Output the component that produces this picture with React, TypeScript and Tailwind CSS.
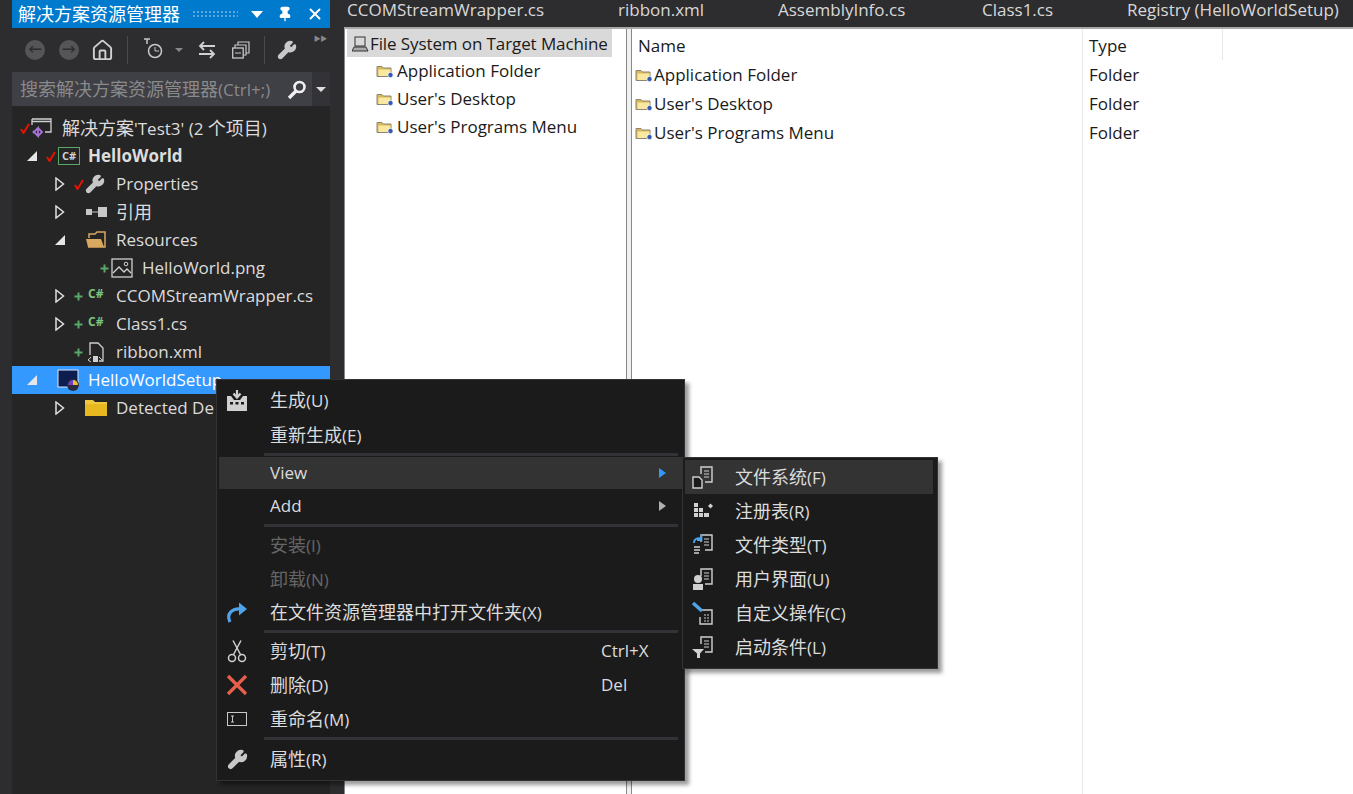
import { ReactNode } from "react";
import { Pin, X, Home, Wrench } from "lucide-react";

const FONT = "font-['Open_Sans','Noto_Sans_CJK_SC',sans-serif]";

/* CJK runs sit a point larger than the latin text, as in the VS UI font */
function Txt({ children }: { children: string }) {
  const parts = children.split(/([\u4e00-\u9fff]+)/);
  return (
    <>
      {parts.map((p, i) =>
        i % 2 === 1 ? (
          <span key={i} className="text-[18px]">{p}</span>
        ) : (
          <span key={i}>{p}</span>
        )
      )}
    </>
  );
}

/* ---------- small drawn icons ---------- */
const Check = () => (
  <svg width="10" height="11" viewBox="0 0 10 11" className="shrink-0">
    <path d="M1 6 L3.5 10 L9 1" fill="none" stroke="#e51400" strokeWidth="2" />
  </svg>
);

const Plus = () => (
  <svg width="9" height="9" viewBox="0 0 9 9" className="shrink-0">
    <path d="M4.5 0.5V8.5M0.5 4.5H8.5" stroke="#59a869" strokeWidth="2" />
  </svg>
);

const Open = () => (
  <svg width="10" height="14" viewBox="0 0 10 14" className="shrink-0">
    <path d="M1 1 L8.5 7 L1 13Z" fill="none" stroke="#e0e0e0" strokeWidth="1.5" />
  </svg>
);

const Expanded = () => (
  <svg width="10" height="10" viewBox="0 0 10 10" className="shrink-0">
    <path d="M10 0V10H0Z" fill="#e6e6e6" />
  </svg>
);

const FolderSmall = () => (
  <svg width="18" height="14" viewBox="0 0 18 14" className="shrink-0">
    <path d="M1 2.5H6L7.5 4H15V12.500H1Z" fill="#d8b858" stroke="#8c8474" />
    <path d="M2.500 5.500H14.500V12H2.500Z" fill="#f8e8a0" />
    <circle cx="14.5" cy="11" r="2.600" fill="#3458b0" stroke="#fff" strokeWidth="0.7" />
  </svg>
);

const Doc = ({ children }: { children?: ReactNode }) => (
  <svg width="24" height="24" viewBox="0 0 24 24" className="shrink-0">
    <path d="M10 9V2H21V17H14" fill="none" stroke="#d0d0d0" strokeWidth="1.4" />
    <path d="M13 6H18M13 9H18M13 12H18" stroke="#d0d0d0" />
    {children}
  </svg>
);

const MenuIcons: Record<string, ReactNode> = {
  fs: <Doc><path d="M2 12H8L11 15V23H2Z" fill="#1b1b1c" stroke="#d0d0d0" strokeWidth="1.4" /></Doc>,
  reg: (
    <svg width="24" height="24" viewBox="0 0 24 24">
      <path d="M3 4h4v4H3zM3 9h4v4H3zM8 9h4v4H8zM3 14h4v4H3zM8 14h4v4H8zM13 14h5v4h-5z" fill="#d0d0d0" />
      <path d="M17 7l2.500-2.500L22 7l-2.500 2.500z" fill="#d0d0d0" />
    </svg>
  ),
  type: <Doc><path d="M3 10a4.500 4.500 0 0 1 7-4M10.500 2v5H6" fill="none" stroke="#4fa3e8" strokeWidth="1.800" /><path d="M3 14H9M3 17H9M3 20H8" stroke="#d0d0d0" strokeWidth="1.300" /></Doc>,
  ui: <Doc><circle cx="7" cy="12" r="4" fill="#d0d0d0" /><path d="M2 23V17H12V23Z" fill="#d0d0d0" /></Doc>,
  act: (
    <svg width="24" height="24" viewBox="0 0 24 24">
      <path d="M9 9H21V23H9V16" fill="none" stroke="#d0d0d0" strokeWidth="1.400" />
      <path d="M13 14h5M13 17h5M13 20h5" stroke="#d0d0d0" strokeDasharray="2 1" />
      <path d="M2 2L11 10" stroke="#4fa3e8" strokeWidth="3.500" />
    </svg>
  ),
  cond: <Doc><path d="M1 14H13L9 18.500V23H6V18.500Z" fill="#d0d0d0" /></Doc>,
  build: (
    <svg width="24" height="24" viewBox="0 0 24 24">
      <path d="M12 1V7M8.500 4.500L12 8.500L15.500 4.500" fill="none" stroke="#d0d0d0" strokeWidth="2.200" />
      <path d="M2 7H6L9 11H15L18 7H22V22H2Z" fill="#d0d0d0" />
      <path d="M5 13h3v2.500H5zM10.500 13h3v2.500h-3zM16 13h3v2.500h-3z" fill="#1b1b1c" />
    </svg>
  ),
  open: (
    <svg width="24" height="24" viewBox="0 0 24 24">
      <path d="M5 21C1 13 7 7 16 8" fill="none" stroke="#4fa3e8" strokeWidth="3.200" />
      <path d="M14 1.500L22 8L14 14.500Z" fill="#4fa3e8" />
    </svg>
  ),
  cut: (
    <svg width="24" height="24" viewBox="0 0 24 24">
      <path d="M8.500 15.500L16 1.500M15.500 15.500L8 1.500" stroke="#d0d0d0" strokeWidth="1.500" />
      <circle cx="7" cy="19" r="3.500" fill="none" stroke="#d0d0d0" strokeWidth="1.500" />
      <circle cx="17" cy="19" r="3.500" fill="none" stroke="#d0d0d0" strokeWidth="1.500" />
    </svg>
  ),
  del: (
    <svg width="24" height="24" viewBox="0 0 24 24">
      <path d="M3 3L21 21M21 3L3 21" stroke="#e8604c" strokeWidth="3.200" />
    </svg>
  ),
  rename: (
    <svg width="24" height="24" viewBox="0 0 24 24">
      <rect x="2.500" y="5.500" width="19" height="13" fill="none" stroke="#c8c8c8" />
      <path d="M6 9h3M7.500 9v6M6 15h3" stroke="#c8c8c8" />
    </svg>
  ),
  wrench: <Wrench size={21} color="#c8c8c8" fill="#c8c8c8" />,
};

/* ---------- solution explorer ---------- */
type Row = { offset: string; toggle?: "open" | "down"; mark?: "check" | "plus"; icon: ReactNode; label: string; bold?: boolean; active?: boolean };

const CsBox = () => (
  <span className="ml-[1px] w-[22px] h-[18px] border border-[#59a869] text-[11px] leading-[16px] text-center font-bold text-[#d0d0d0] shrink-0">C#</span>
);
const CsText = () => <span className="ml-[3px] w-[20px] text-[12px] leading-none font-bold text-[#7cc47f] shrink-0 -mt-1">C#</span>;

const ROWS: Row[] = [
  { offset: "-ml-[11px]", mark: "check", label: "解决方案'Test3' (2 个项目)", icon: (
    <svg width="22" height="22" viewBox="0 0 22 22" className="shrink-0">
      <path d="M1 2H20V15H14M1 2V8M1 4.500H20" fill="none" stroke="#d0d0d0" strokeWidth="1.300" />
      <path d="M2 14L7 19V11L2 16M7 11L11 15L7 19" fill="none" stroke="#a672d8" strokeWidth="1.800" />
    </svg>
  ) },
  { offset: "ml-[15px]", toggle: "down", mark: "check", label: "HelloWorld", bold: true, icon: <CsBox /> },
  { offset: "ml-[43px]", toggle: "open", mark: "check", label: "Properties", icon: <Wrench size={20} color="#c8c8c8" fill="#c8c8c8" className="shrink-0" /> },
  { offset: "ml-[43px]", toggle: "open", label: "引用", icon: (
    <svg width="22" height="14" viewBox="0 0 22 14" className="shrink-0">
      <path d="M1 4h6v6H1zM13 2h9v10h-9z" fill="#c8c8c8" /><path d="M7 7h6" stroke="#c8c8c8" />
    </svg>
  ) },
  { offset: "ml-[43px]", toggle: "down", label: "Resources", icon: (
    <svg width="22" height="18" viewBox="0 0 22 18" className="shrink-0">
      <path d="M4 7V3H10L12 1H20V16H3" fill="none" stroke="#d8a860" strokeWidth="1.500" />
      <path d="M1 8H16L19 16H3Z" fill="#d8a860" />
    </svg>
  ) },
  { offset: "ml-[69px]", mark: "plus", label: "HelloWorld.png", icon: (
    <svg width="22" height="20" viewBox="0 0 22 20" className="shrink-0">
      <rect x="1" y="1" width="20" height="18" fill="none" stroke="#d0d0d0" strokeWidth="1.300" />
      <path d="M2 15L8 9L13 14L16 11L20 15" fill="none" stroke="#d0d0d0" strokeWidth="1.300" />
      <circle cx="15" cy="6" r="1.800" fill="none" stroke="#d0d0d0" />
    </svg>
  ) },
  { offset: "ml-[43px]", toggle: "open", mark: "plus", label: "CCOMStreamWrapper.cs", icon: <CsText /> },
  { offset: "ml-[43px]", toggle: "open", mark: "plus", label: "Class1.cs", icon: <CsText /> },
  { offset: "ml-[43px]", mark: "plus", label: "ribbon.xml", icon: (
    <svg width="18" height="22" viewBox="0 0 18 22" className="ml-[2px] shrink-0">
      <path d="M3 14V2H11L16 7V20H12" fill="none" stroke="#d0d0d0" strokeWidth="1.300" />
      <path d="M1 19l3-3M1 19l3 2M15 19l-3-3" stroke="#d0d0d0" />
      <rect x="6" y="15" width="5" height="6" fill="#d0d0d0" />
    </svg>
  ) },
  { offset: "ml-[15px]", toggle: "down", active: true, label: "HelloWorldSetup", icon: (
    <svg width="24" height="24" viewBox="0 0 24 24" className="shrink-0">
      <rect x="1" y="2" width="20" height="17" fill="#0d1d50" stroke="#dbe8f8" />
      <circle cx="16" cy="17" r="6" fill="#2a2a40" />
      <path d="M16 12a5 5 0 0 1 5 5h-5z" fill="#e8c030" /><path d="M11 17a5 5 0 0 1 5-5v5z" fill="#7040c0" />
    </svg>
  ) },
  { offset: "ml-[43px]", toggle: "open", label: "Detected De", icon: (
    <svg width="22" height="18" viewBox="0 0 22 18" className="shrink-0">
      <path d="M0 1H8L10 3H22V17H0Z" fill="#f0c840" /><path d="M0 5H22V17H0Z" fill="#e8b820" />
    </svg>
  ) },
];

function TreeRow({ offset, toggle, mark, icon, label, bold, active }: Row) {
  return (
    <div className={`h-[28px] flex items-center whitespace-nowrap ${active ? "bg-[#3399ff] text-white" : "text-[#dcdcdc]"}`}>
      <div className={`flex items-center ${offset}`}>
        <span className="w-[19px] shrink-0 flex">{toggle === "open" ? <Open /> : toggle === "down" ? <Expanded /> : null}</span>
        <span className="w-[11px] shrink-0 flex">
          {mark === "check" && <Check />}
          {mark === "plus" && <Plus />}
        </span>
        <span className="w-[31px] shrink-0 flex">{icon}</span>
        <span className={`text-[17px] ${bold ? "font-bold" : ""}`}><Txt>{label}</Txt></span>
      </div>
    </div>
  );
}

const Sep = () => <div className="w-[1px] h-[28px] bg-[#4a4a4e] shrink-0" />;

const NavCircle = ({ glyph, className }: { glyph: string; className: string }) => (
  <span className={`w-[20px] h-[20px] rounded-full bg-[#555558] text-[#2d2d30] text-[14px] leading-[18px] text-center font-bold shrink-0 ${className}`}>{glyph}</span>
);

function Explorer() {
  return (
    <aside className="w-[318px] h-[794px] bg-[#252526] flex flex-col shrink-0">
      <div className="h-[28px] bg-[#007acc] text-white flex items-center pl-[6px]">
        <span className="text-[18px] whitespace-nowrap">解决方案资源管理器</span>
        <div className="ml-[12px] w-[46px] h-[8px] bg-[radial-gradient(#5aa8dc_1px,transparent_1px)] bg-[length:4px_4px]" />
        <span className="ml-[13px] w-0 h-0 border-x-[6px] border-x-transparent border-t-[7px] border-t-white" />
        <Pin size={16} fill="#fff" className="ml-[14px]" />
        <X size={18} strokeWidth={2.500} className="ml-[13px]" />
      </div>
      <div className="h-[44px] bg-[#2d2d30] flex items-center pl-[13px] relative">
        <NavCircle glyph="←" className="" />
        <NavCircle glyph="→" className="ml-[14px]" />
        <Home size={23} color="#d0d0d0" className="ml-[12px] shrink-0" />
        <div className="ml-[13px]"><Sep /></div>
        <svg width="22" height="24" viewBox="0 0 22 24" className="ml-[15px] shrink-0">
          <path d="M1 1H7M4 1V6" stroke="#c8c8c8" strokeWidth="1.500" />
          <circle cx="12" cy="13" r="6.500" fill="none" stroke="#c8c8c8" strokeWidth="1.500" />
          <path d="M12 9V13H16" fill="none" stroke="#c8c8c8" />
        </svg>
        <span className="ml-[10px] w-0 h-0 border-x-[4px] border-x-transparent border-t-[4px] border-t-[#888]" />
        <svg width="18" height="18" viewBox="0 0 18 18" className="ml-[15px] shrink-0">
          <path d="M17 5H2M6 1L2 5L6 9M1 13H16M12 9L16 13L12 17" fill="none" stroke="#d0d0d0" strokeWidth="1.800" />
        </svg>
        <svg width="18" height="18" viewBox="0 0 18 18" className="ml-[16px] shrink-0">
          <path d="M6 4V1H17V12H14M3 7V4H14V14H11" fill="none" stroke="#c8c8c8" strokeWidth="1.200" />
          <rect x="0.700" y="7" width="10.500" height="10" fill="#2d2d30" stroke="#c8c8c8" strokeWidth="1.300" />
          <path d="M3 12H9" stroke="#c8c8c8" />
        </svg>
        <div className="ml-[14px]"><Sep /></div>
        <Wrench size={20} color="#c8c8c8" fill="#c8c8c8" className="ml-[12px] shrink-0" />
        <span className="absolute right-[3px] top-[6px] text-[7px] text-[#888] tracking-tighter">▶▶</span>
      </div>
      <div className="h-[34px] bg-[#333337] flex items-center text-[#8a8a8a]">
        <div className="h-full bg-[#3f3f46] w-[300px] flex items-center pl-[8px] pr-[5px] pt-[1px] overflow-hidden">
          <span className="text-[17px] whitespace-nowrap flex-1"><Txt>搜索解决方案资源管理器(Ctrl+;)</Txt></span>
          <svg width="20" height="20" viewBox="0 0 20 20" className="shrink-0">
            <circle cx="12.500" cy="7" r="5" fill="none" stroke="#f0f0f0" strokeWidth="2.600" />
            <path d="M9 11L2 18" stroke="#f0f0f0" strokeWidth="3.400" />
          </svg>
        </div>
        <span className="ml-[4px] w-0 h-0 border-x-[5px] border-x-transparent border-t-[5px] border-t-[#ddd]" />
      </div>
      <div className="pt-[8px]">
        {ROWS.map((r) => (
          <TreeRow key={r.label} {...r} />
        ))}
      </div>
    </aside>
  );
}

/* ---------- right side: designer ---------- */
const TABS = [
  ["CCOMStreamWrapper.cs", "w-[271px]"],
  ["ribbon.xml", "w-[160px]"],
  ["AssemblyInfo.cs", "w-[204px]"],
  ["Class1.cs", "w-[145px]"],
  ["Registry (HelloWorldSetup)", "w-auto"],
];

const TREE_ITEMS = ["Application Folder", "User's Desktop", "User's Programs Menu"];

function Designer() {
  return (
    <main className="flex-1 min-w-0 h-[794px] flex flex-col">
      <div className="h-[19px] mb-[8px] flex items-center pl-[17px] text-[#d8d8d8] text-[17px] leading-[19px] whitespace-nowrap">
        {TABS.map(([t, w]) => (
          <span key={t} className={`${w} shrink-0`}>{t}</span>
        ))}
      </div>
      <div className="flex-1 min-h-0 ml-[14px] flex bg-white border-t-2 border-[#a8a8a8]">
        <section className="w-[282px] border-l border-[#888] pl-[2px] text-[17px] text-[#1a1a1a]">
          <div className="h-[28px] w-[265px] pt-[1px] bg-[#d9d9d9] flex items-center whitespace-nowrap pl-[5px] tracking-[-0.1px]">
            <svg width="18" height="16" viewBox="0 0 18 16" className="shrink-0">
              <rect x="3" y="1" width="10" height="9" fill="#d8d8d8" stroke="#333" />
              <path d="M0 15L2 11H14L16 15Z" fill="#aaa" stroke="#333" />
            </svg>
            File System on Target Machine
          </div>
          {TREE_ITEMS.map((t) => (
            <div key={t} className="h-[28px] flex items-center pl-[29px] whitespace-nowrap">
              <FolderSmall />
              <span className="ml-[3px]">{t}</span>
            </div>
          ))}
        </section>
        <div className="w-[6px] bg-[#f0f0f0] border-x border-[#888] shrink-0" />
        <section className="flex-1 flex text-[17px] text-[#1a1a1a]">
          <div className="w-[451px] border-r border-[#e8e8e8] shrink-0">
            <div className="h-[31px] pt-[2px] pl-[6px] flex items-center">Name</div>
            {TREE_ITEMS.map((t) => (
              <div key={t} className="h-[29px] pl-[3px] flex items-center whitespace-nowrap">
                <FolderSmall />
                <span className="ml-[1px]">{t}</span>
              </div>
            ))}
          </div>
          <div>
            <div className="h-[31px] w-[140px] pt-[2px] pl-[6px] flex items-center border-r border-[#e8e8e8]">Type</div>
            {TREE_ITEMS.map((t) => (
              <div key={t} className="h-[29px] pl-[6px] flex items-center">Folder</div>
            ))}
          </div>
        </section>
      </div>
    </main>
  );
}

/* ---------- context menus ---------- */
type Item = { label?: string; icon?: string; shortcut?: string; sub?: boolean; subActive?: boolean; disabled?: boolean; hot?: boolean; sep?: boolean; h?: string };

const MAIN_MENU: Item[] = [
  { label: "生成(U)", icon: "build", h: "h-[35px]" },
  { label: "重新生成(E)", h: "h-[34px]" },
  { sep: true },
  { label: "View", hot: true, sub: true, subActive: true, h: "h-[32px]" },
  { label: "Add", sub: true, h: "h-[34px]" },
  { sep: true },
  { label: "安装(I)", disabled: true, h: "h-[34px]" },
  { label: "卸载(N)", disabled: true, h: "h-[34px]" },
  { label: "在文件资源管理器中打开文件夹(X)", icon: "open", h: "h-[33px]" },
  { sep: true },
  { label: "剪切(T)", icon: "cut", shortcut: "Ctrl+X", h: "h-[34px]" },
  { label: "删除(D)", icon: "del", shortcut: "Del", h: "h-[34px]" },
  { label: "重命名(M)", icon: "rename", h: "h-[34px]" },
  { sep: true },
  { label: "属性(R)", icon: "wrench", h: "h-[36px]" },
];

const SUB_MENU: Item[] = [
  { label: "文件系统(F)", icon: "fs", hot: true },
  { label: "注册表(R)", icon: "reg" },
  { label: "文件类型(T)", icon: "type" },
  { label: "用户界面(U)", icon: "ui" },
  { label: "自定义操作(C)", icon: "act" },
  { label: "启动条件(L)", icon: "cond" },
];

function MenuRow({ item, textGap }: { item: Item; textGap: string }) {
  if (item.sep) return <div className="h-[3px] bg-[#333337] my-[1px] ml-[45px] mr-[4px]" />;
  return (
    <div className={`relative flex items-center text-[17px] whitespace-nowrap ${item.h ?? "h-[34px]"} ${item.hot ? "bg-[#333334]" : ""} ${item.disabled ? "text-[#656565]" : "text-[#dcdcdc]"}`}>
      <span className="w-[36px] flex justify-center shrink-0">{item.icon && MenuIcons[item.icon]}</span>
      <span className={textGap}><Txt>{item.label ?? ""}</Txt></span>
      {item.shortcut && <span className="absolute left-[382px]">{item.shortcut}</span>}
      {item.sub && (
        <span className={`absolute right-[16px] w-0 h-0 border-y-[5px] border-y-transparent border-l-[7px] ${item.subActive ? "border-l-[#3399ff]" : "border-l-[#b0b0b0]"}`} />
      )}
    </div>
  );
}

export default function App() {
  return (
    <div className={`relative w-[1353px] h-[794px] overflow-hidden bg-[#2d2d30] flex pl-[12px] ${FONT}`}>
      <Explorer />
      <Designer />

      <div className="absolute left-[216px] top-[379px] w-[469px] h-[402px] bg-[#1b1b1c] border border-[#333337] pt-[3px] px-[2px] shadow-[4px_4px_4px_rgba(0,0,0,0.4)]">
        {MAIN_MENU.map((item, i) => (
          <MenuRow key={i} item={item} textGap="ml-[15px]" />
        ))}
      </div>

      <div className="absolute left-[682px] top-[457px] w-[256px] h-[212px] bg-[#1b1b1c] border border-[#333337] pt-[2px] pl-[2px] pr-[4px] shadow-[4px_4px_4px_rgba(0,0,0,0.4)]">
        {SUB_MENU.map((item) => (
          <MenuRow key={item.label} item={item} textGap="ml-[14px]" />
        ))}
      </div>
    </div>
  );
}
